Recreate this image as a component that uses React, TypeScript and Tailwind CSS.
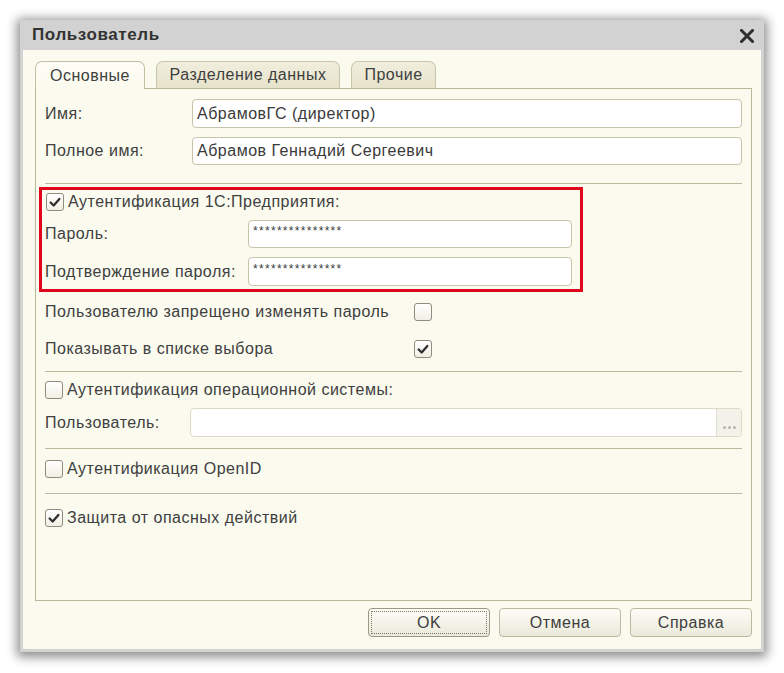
import React from "react";

const font = { fontFamily: '"Liberation Sans", Arial, sans-serif' };

function Check() {
  return (
    <svg width="14" height="14" viewBox="0 0 16 16" className="block">
      <path d="M3 8.5 L6.5 12 L13 4.5" fill="none" stroke="#2f2f2f" strokeWidth="2.6" strokeLinecap="round" strokeLinejoin="round" />
    </svg>
  );
}

function Box({ checked }: { checked?: boolean }) {
  return (
    <div className="w-[18px] h-[18px] shrink-0 rounded-[3px] border border-[#8f8c7c] bg-gradient-to-b from-[#ffffff] to-[#f1efe4] flex items-center justify-center">
      {checked ? <Check /> : null}
    </div>
  );
}

function Input({ value, className = "", pw }: { value?: string; className?: string; pw?: boolean }) {
  return (
    <div
      className={
        "rounded-[4px] border border-[#c8c4aa] bg-white flex items-center pl-[4px] text-[#3a3a3a] " +
        (pw ? "text-[12px] tracking-[1.3px] pb-[6px] " : "text-[16px] ") +
        className
      }
    >
      {value}
    </div>
  );
}

function Sep({ className = "" }: { className?: string }) {
  return <div className={"h-px bg-[#bdb9a0] " + className} />;
}

function Btn({ label, focus }: { label: string; focus?: boolean }) {
  return (
    <div
      className={
        "h-[29px] rounded-[4px] border bg-gradient-to-b from-[#fdfdf8] to-[#ebe9da] flex items-center justify-center text-[16px] text-[#3e3e3e] " +
        (focus ? "border-[#9c9984] p-[2px] w-[122px]" : "border-[#bcb9a3] w-[122px]")
      }
    >
      {focus ? (
        <div className="w-full h-full border border-dotted border-[#7a7866] flex items-center justify-center">{label}</div>
      ) : (
        label
      )}
    </div>
  );
}

export default function App() {
  return (
    <div className="w-[784px] h-[673px] bg-white pt-[20px] pl-[20px] tracking-[0.5px]" style={font}>
      <div className="w-[744px] h-[632px] bg-[#d2d2d2] px-[3px] pb-[3px] flex flex-col shadow-[0_2px_10px_3px_rgba(0,0,0,0.45)]">
        {/* title bar */}
        <div className="h-[30px] shrink-0 flex items-center justify-between pl-[9px] pr-[7px]">
          <span className="font-bold text-[17px] text-[#333] tracking-[0.6px]">Пользователь</span>
          <svg width="14" height="14" viewBox="0 0 14 14" className="mt-[2px]">
            <path d="M1.5 1.5 L12.5 12.5 M12.5 1.5 L1.5 12.5" stroke="#2e2e2e" strokeWidth="3" strokeLinecap="square" />
          </svg>
        </div>
        {/* body */}
        <div className="flex-1 bg-[#fafaee] pt-[11px] pl-[12px] pr-[9px] pb-[12px] flex flex-col">
          {/* tabs */}
          <div className="h-[27px] flex items-end gap-[11px] relative z-10">
            <div className="h-[28px] w-[110px] -mb-px rounded-t-[7px] border border-b-0 border-[#c3bfa3] bg-gradient-to-b from-[#fdfdf6] to-[#fafaee] flex items-center justify-center text-[16px] text-[#404040]">
              Основные
            </div>
            <div className="h-[27px] w-[184px] rounded-t-[7px] border border-b-0 border-[#c9c5aa] bg-gradient-to-b from-[#f1eedd] to-[#e6e2cb] flex items-center justify-center text-[16px] text-[#404040]">
              Разделение данных
            </div>
            <div className="h-[27px] w-[85px] rounded-t-[7px] border border-b-0 border-[#c9c5aa] bg-gradient-to-b from-[#f1eedd] to-[#e6e2cb] flex items-center justify-center text-[16px] text-[#404040]">
              Прочие
            </div>
          </div>
          {/* panel */}
          <div className="h-[513px] shrink-0 border border-[#bab69c] bg-[#fafaee] px-[9px] flex flex-col text-[16px] text-[#404040]">
            <div className="mt-[10px] h-[29px] flex items-center">
              <span className="w-[147px] shrink-0">Имя:</span>
              <Input value="АбрамовГС (директор)" className="flex-1 h-[29px]" />
            </div>
            <div className="mt-[9px] h-[28px] flex items-center">
              <span className="w-[147px] shrink-0">Полное имя:</span>
              <Input value="Абрамов Геннадий Сергеевич" className="flex-1 h-[28px]" />
            </div>
            <Sep className="mt-[18px]" />
            {/* highlighted group */}
            <div className="mt-[3px] -ml-[6px] w-[544px] h-[105px] border-[3px] border-[#e2061c] pl-[3px] pt-px flex flex-col">
              <div className="h-[22px] flex items-center gap-[4px] pl-px">
                <Box checked />
                <span>Аутентификация 1С:Предприятия:</span>
              </div>
              <div className="mt-[7px] h-[28px] flex items-center">
                <span className="w-[203px] shrink-0">Пароль:</span>
                <Input value="***************" pw className="w-[324px] h-[28px]" />
              </div>
              <div className="mt-[9px] h-[29px] flex items-center">
                <span className="w-[203px] shrink-0">Подтверждение пароля:</span>
                <Input value="***************" pw className="w-[324px] h-[29px]" />
              </div>
            </div>
            <div className="mt-[8px] h-[24px] flex items-center">
              <span className="w-[369px] shrink-0">Пользователю запрещено изменять пароль</span>
              <Box />
            </div>
            <div className="mt-[13px] h-[24px] flex items-center">
              <span className="w-[369px] shrink-0">Показывать в списке выбора</span>
              <Box checked />
            </div>
            <Sep className="mt-[10px]" />
            <div className="mt-[7px] h-[22px] flex items-center gap-[4px]">
              <Box />
              <span>Аутентификация операционной системы:</span>
            </div>
            <div className="mt-[7px] h-[29px] flex items-center">
              <span className="w-[145px] shrink-0">Пользователь:</span>
              <div className="flex-1 h-[29px] rounded-[4px] border border-[#dcd9c6] bg-white flex">
                <div className="flex-1" />
                <div className="w-[25px] border-l border-[#e0ded0] bg-[#f3f2ea] rounded-r-[4px] flex items-end justify-center pb-[7px] gap-[2px]">
                  <span className="w-[3px] h-[3px] rounded-full bg-[#b8b6a8]" />
                  <span className="w-[3px] h-[3px] rounded-full bg-[#b8b6a8]" />
                  <span className="w-[3px] h-[3px] rounded-full bg-[#b8b6a8]" />
                </div>
              </div>
            </div>
            <Sep className="mt-[11px]" />
            <div className="mt-[9px] h-[22px] flex items-center gap-[4px]">
              <Box />
              <span>Аутентификация OpenID</span>
            </div>
            <Sep className="mt-[13px]" />
            <div className="mt-[13px] h-[22px] flex items-center gap-[4px]">
              <Box checked />
              <span>Защита от опасных действий</span>
            </div>
          </div>
          {/* buttons */}
          <div className="mt-[7px] flex justify-end gap-[9px]">
            <Btn label="OK" focus />
            <Btn label="Отмена" />
            <Btn label="Справка" />
          </div>
        </div>
      </div>
    </div>
  );
}
